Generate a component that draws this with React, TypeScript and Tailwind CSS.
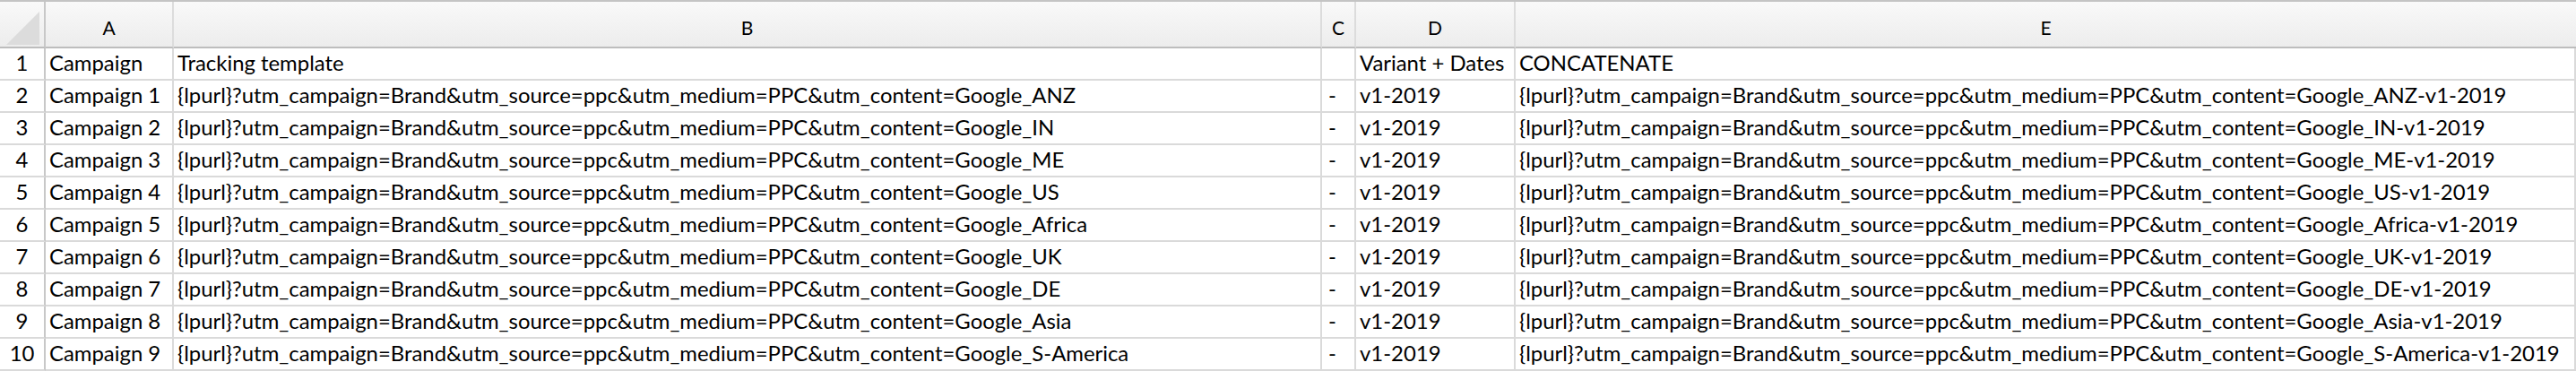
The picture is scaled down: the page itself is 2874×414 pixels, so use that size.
const regions = ["ANZ", "IN", "ME", "US", "Africa", "UK", "DE", "Asia", "S-America"];

const template = "{lpurl}?utm_campaign=Brand&utm_source=ppc&utm_medium=PPC&utm_content=Google_";

type Row = { a: string; b: string; c: string; d: string; e: string };

const rows: Row[] = [
  { a: "Campaign", b: "Tracking template", c: "", d: "Variant + Dates", e: "CONCATENATE" },
  ...regions.map((r, i) => ({
    a: `Campaign ${i + 1}`,
    b: template + r,
    c: "-",
    d: "v1-2019",
    e: `${template}${r}-v1-2019`,
  })),
];

const cols = ["A", "B", "C", "D", "E"];

// column grid: row numbers · A · B · C · D · E (widths include the 2px right line)
const grid = "grid grid-cols-[51px_143px_1281px_38px_178px_1fr]";

const cell =
  "h-[36px] border-r-2 border-b-2 border-[#dadada] flex items-end pl-[4px] pb-[6px] overflow-hidden whitespace-nowrap text-black";

export default function App() {
  return (
    <div
      className="w-[2874px] h-[414px] bg-white overflow-hidden text-[23.9px] leading-none"
      style={{ fontFamily: "Lato, 'Open Sans', sans-serif" }}
    >
      {/* ── Column header strip ── */}
      <div className={`${grid} h-[54px] border-t-2 border-[#c4c4c4] bg-linear-to-b from-[#f9f9f9] to-[#ececec]`}>
        <div className="relative border-r-2 border-b-2 border-r-[#c8c8c8] border-b-[#bdbdbd]">
          <svg className="absolute left-0 top-0" width="49" height="50" viewBox="0 0 49 50">
            <polygon points="44,11 44,48 7,48" fill="#dcdcdc" />
          </svg>
        </div>
        {cols.map((c, i) => (
          <div
            key={c}
            className={`flex items-center justify-center pt-[6px] border-b-2 border-b-[#bdbdbd] text-[21px] text-black ${
              i < cols.length - 1 ? "border-r-2 border-r-[#dcdcdc]" : ""
            }`}
          >
            {c}
          </div>
        ))}
      </div>

      {/* ── Body rows ── */}
      {rows.map((row, i) => (
        <div key={i} className={grid}>
          <div className="h-[36px] border-r-2 border-b-2 border-r-[#c8c8c8] border-b-[#dadada] flex items-end justify-center pb-[6px] text-black">
            {i + 1}
          </div>
          <div className={cell}>{row.a}</div>
          <div className={cell}>{row.b}</div>
          <div className={`${cell} pl-[7px]`}>{row.c}</div>
          <div className={cell}>{row.d}</div>
          <div className={`${cell} border-r-0`}>{row.e}</div>
        </div>
      ))}
    </div>
  );
}
